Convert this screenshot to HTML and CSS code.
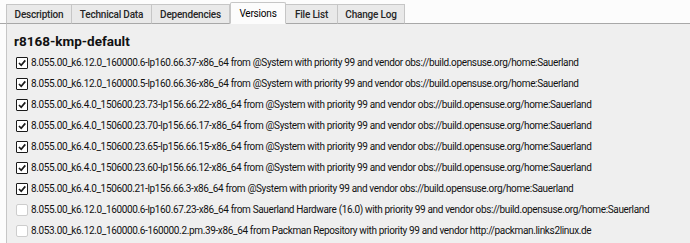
FILE: index.html
```html
<!DOCTYPE html>
<html lang="en">
<head>
    <meta charset="UTF-8">
    <title>Versions</title>
    <link rel="stylesheet" href="styles.css">
</head>
<body>
    <div class="tabs">
        <div class="tab">Description</div>
        <div class="tab">Technical Data</div>
        <div class="tab">Dependencies</div>
        <div class="tab active">Versions</div>
        <div class="tab">File List</div>
        <div class="tab">Change Log</div>
    </div>

    <div class="panel">
        <h2>r8168-kmp-default</h2>
        <div class="versions">
            <label class="version"><span class="box checked"></span>8.055.00_k6.12.0_160000.6-lp160.66.37-x86_64 from @System with priority 99 and vendor obs://build.opensuse.org/home:Sauerland</label>
            <label class="version"><span class="box checked"></span>8.055.00_k6.12.0_160000.5-lp160.66.36-x86_64 from @System with priority 99 and vendor obs://build.opensuse.org/home:Sauerland</label>
            <label class="version"><span class="box checked"></span>8.055.00_k6.4.0_150600.23.73-lp156.66.22-x86_64 from @System with priority 99 and vendor obs://build.opensuse.org/home:Sauerland</label>
            <label class="version"><span class="box checked"></span>8.055.00_k6.4.0_150600.23.70-lp156.66.17-x86_64 from @System with priority 99 and vendor obs://build.opensuse.org/home:Sauerland</label>
            <label class="version"><span class="box checked"></span>8.055.00_k6.4.0_150600.23.65-lp156.66.15-x86_64 from @System with priority 99 and vendor obs://build.opensuse.org/home:Sauerland</label>
            <label class="version"><span class="box checked"></span>8.055.00_k6.4.0_150600.23.60-lp156.66.12-x86_64 from @System with priority 99 and vendor obs://build.opensuse.org/home:Sauerland</label>
            <label class="version"><span class="box checked"></span>8.055.00_k6.4.0_150600.21-lp156.66.3-x86_64 from @System with priority 99 and vendor obs://build.opensuse.org/home:Sauerland</label>
            <label class="version"><span class="box"></span>8.055.00_k6.12.0_160000.6-lp160.67.23-x86_64 from Sauerland Hardware (16.0) with priority 99 and vendor obs://build.opensuse.org/home:Sauerland</label>
            <label class="version"><span class="box"></span>8.053.00_k6.12.0_160000.6-160000.2.pm.39-x86_64 from Packman Repository with priority 99 and vendor http://packman.links2linux.de</label>
        </div>
    </div>
</body>
</html>
```

FILE: styles.css
```css
* {
    margin: 0;
    padding: 0;
    box-sizing: border-box;
}

body {
    background: #fcfcfc;
    color: #111;
    font-family: Roboto, "Liberation Sans", sans-serif;
    font-size: 10px;
}

.tabs {
    display: flex;
    align-items: flex-end;
    height: 24px;
    padding-left: 6px;
    border-bottom: 1px solid #a8a8a8;
}

.tab {
    height: 20px;
    padding-top: 1px;
    margin-bottom: -1px;
    text-align: center;
    line-height: 17px;
    font-size: 10px;
    font-weight: 500;
    letter-spacing: -0.2px;
    color: #262626;
    background: #e9e9e9;
    border: 1px solid #c6c6c6;
    border-left: none;
    border-bottom: 1px solid #a8a8a8;
}

.tab:nth-child(1) { width: 66px; border-left: 1px solid #c6c6c6; }
.tab:nth-child(2) { width: 80px; }
.tab:nth-child(3) { width: 78px; }
.tab:nth-child(4) { width: 56px; }
.tab:nth-child(5) { width: 52px; }
.tab:nth-child(6) { width: 67px; }

.tab.active {
    height: 22px;
    padding-top: 2px;
    font-weight: 400;
    color: #000;
    background: #fcfcfc;
    border: 1px solid #c6c6c6;
    border-bottom-color: #fcfcfc;
    border-radius: 2px 2px 0 0;
}

.panel {
    background: #efefef;
    border-left: 1px solid #c6c6c6;
    margin-left: 6px;
    height: 219px;
    padding: 9px 0 0 7px;
}

h2 {
    font-size: 13.5px;
    line-height: 16px;
    font-weight: bold;
    margin-bottom: 3px;
}

.versions {
    display: flex;
    flex-direction: column;
    padding-left: 2px;
}

.version {
    display: flex;
    align-items: center;
    gap: 3px;
    height: 21px;
    white-space: nowrap;
    letter-spacing: -0.35px;
}

.box {
    width: 12px;
    height: 12px;
    background: #fff;
    border: 1px solid #cdcdcd;
    border-radius: 2px;
    flex-shrink: 0;
}

.box.checked {
    border: 1px solid #1a1a1a;
    border-radius: 1px;
    background: #fff url("data:image/svg+xml;utf8,<svg xmlns='http://www.w3.org/2000/svg' viewBox='0 0 10 10'><path d='M2 5 L4.2 7.3 L8.3 2.4' fill='none' stroke='%231a1a1a' stroke-width='1.7'/></svg>") center / 10px 10px no-repeat;
}
```
